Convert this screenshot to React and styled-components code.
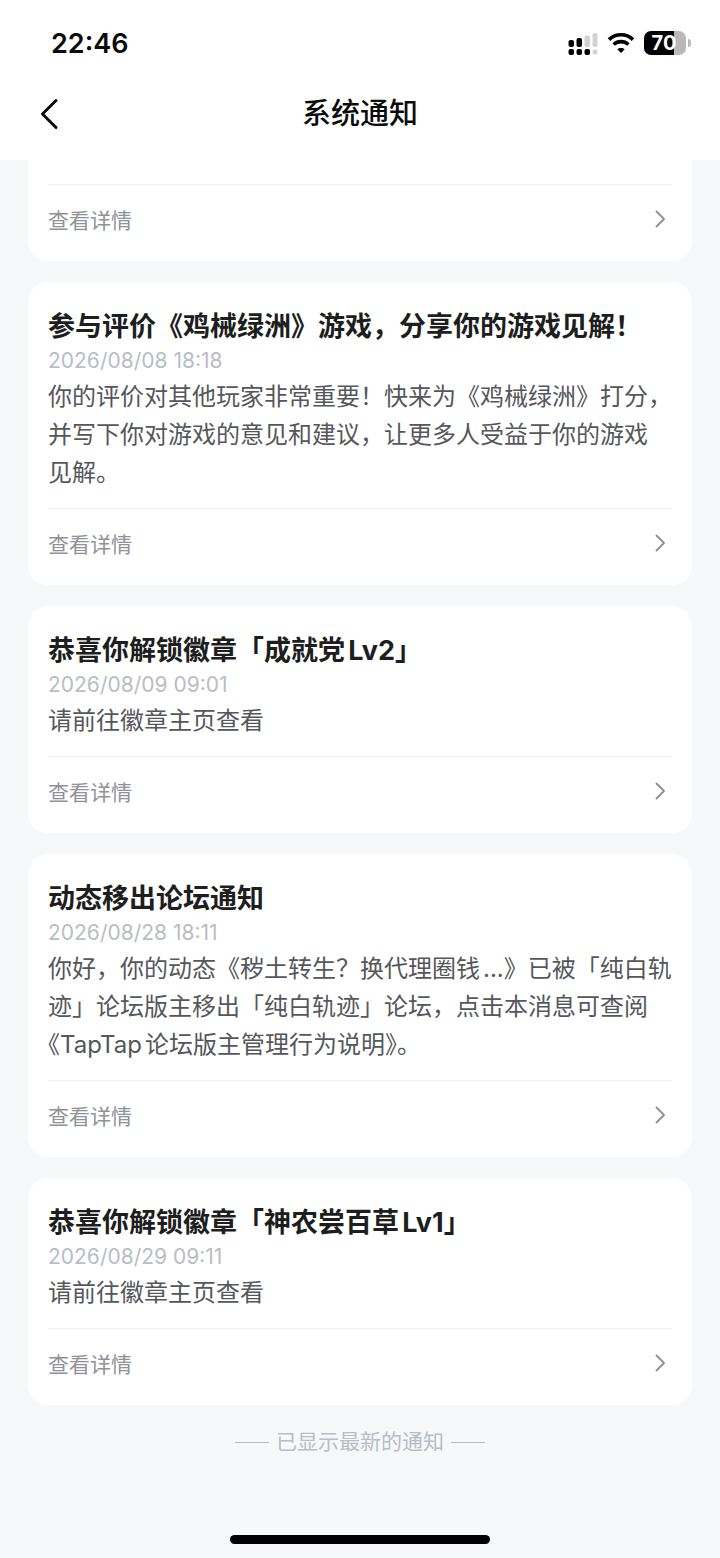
import styled, { createGlobalStyle } from 'styled-components'

const GlobalStyle = createGlobalStyle`
  * {
    box-sizing: border-box;
  }
  body {
    margin: 0;
    background: #f6f8fa;
    font-family: Inter, "Noto Sans CJK SC", sans-serif;
    text-autospace: normal;
    text-spacing-trim: trim-start;
    -webkit-font-smoothing: antialiased;
  }
  h1, h2, p {
    margin: 0;
  }
`;

const Page = styled.div`
  display: flex;
  flex-direction: column;
  min-height: 100vh;
`;

//--------- HEADER SECTION ---------
const Header = styled.header`
  background: #fff;
`;

const StatusBar = styled.div`
  display: flex;
  align-items: center;
  justify-content: space-between;
  height: 86px;
  padding: 0 29px 0 51px;
`;

const Clock = styled.time`
  font-size: 27px;
  font-weight: 600;
  color: #0b0b0c;
`;

const StatusIcons = styled.div`
  display: flex;
  align-items: center;
  gap: 9px;
`;

const Battery = styled.div`
  display: flex;
  align-items: center;
  gap: 2px;
`;

const BatteryBody = styled.div`
  display: grid;
  place-items: center;
  width: 42px;
  height: 24px;
  padding-right: 2px;
  border-radius: 7px;
  background: linear-gradient(to right, #000 72%, #b9b9b9 72%);
  font-size: 20px;
  line-height: 24px;
  font-weight: 700;
  color: #fff;
`;

const BatteryTip = styled.div`
  width: 3px;
  height: 8px;
  border-radius: 0 3px 3px 0;
  background: #b9b9b9;
`;

const NavBar = styled.nav`
  display: grid;
  grid-template-columns: 100px 1fr 100px;
  align-items: center;
  height: 74px;
  padding-bottom: 18px;
`;

const BackButton = styled.button`
  display: flex;
  align-items: center;
  padding: 0 0 0 39px;
  border: 0;
  background: none;
  color: #0b0b0c;
`;

const PageTitle = styled.h1`
  text-align: center;
  font-size: 29px;
  line-height: 40px;
  font-weight: 500;
  color: #0b0b0c;
`;

//--------- NOTICE LIST ---------
const NoticeList = styled.main`
  display: flex;
  flex-direction: column;
  gap: 21px;
  padding: 0 28px;
`;

const Card = styled.article`
  padding: ${({ $cut }) => ($cut ? '24px 20px 0' : '26px 20px 0')};
  border-radius: ${({ $cut }) => ($cut ? '0 0 20px 20px' : '20px')};
  background: #fff;
`;

const CardTitle = styled.h2`
  font-size: 27px;
  line-height: 38px;
  font-weight: 700;
  color: #1d1e20;
`;

const CardDate = styled.time`
  display: block;
  margin-bottom: 3px;
  font-size: 21px;
  line-height: 29px;
  color: #b9bdc4;
`;

const CardText = styled.p`
  margin-bottom: 16px;
  font-size: 24px;
  line-height: 38px;
  white-space: pre-line;
  color: #55575b;
`;

const DetailLink = styled.a`
  display: flex;
  align-items: center;
  justify-content: space-between;
  height: 77px;
  padding: 0 5px 8px 0;
  border-top: 1px solid #f0f1f3;
  font-size: 21px;
  color: #8f9399;
  text-decoration: none;
`;

//--------- BOTTOM ---------
const EndNote = styled.p`
  display: flex;
  align-items: center;
  justify-content: center;
  gap: 7px;
  padding-top: 21px;
  font-size: 21px;
  line-height: 32px;
  color: #b9bdc4;

  &::before,
  &::after {
    content: '';
    width: 34px;
    height: 1px;
    background: #b9bdc4;
  }
`;

const HomeIndicator = styled.div`
  width: 36%;
  height: 9px;
  margin: auto auto 14px;
  border-radius: 5px;
  background: #000;
`;

const notices = [
  {
    title: "参与评价《鸡械绿洲》游戏，分享你的游戏见解！",
    date: "2026/08/08 18:18",
    text: "你的评价对其他玩家非常重要！快来为《鸡械绿洲》打分，\n并写下你对游戏的意见和建议，让更多人受益于你的游戏\n见解。"
  },
  {
    title: "恭喜你解锁徽章「成就党Lv2」",
    date: "2026/08/09 09:01",
    text: "请前往徽章主页查看"
  },
  {
    title: "动态移出论坛通知",
    date: "2026/08/28 18:11",
    text: "你好，你的动态《秽土转生？换代理圈钱...》已被「纯白轨\n迹」论坛版主移出「纯白轨迹」论坛，点击本消息可查阅\n《TapTap论坛版主管理行为说明》。"
  },
  {
    title: "恭喜你解锁徽章「神农尝百草Lv1」",
    date: "2026/08/29 09:11",
    text: "请前往徽章主页查看"
  }
]

const SignalIcon = () => (
  <svg width="30" height="24" viewBox="0 0 30 24" aria-hidden="true">
    <g fill="#000">
      <rect x="0.5" y="9" width="5.5" height="7" rx="2" />
      <rect x="8.5" y="7" width="5.5" height="9" rx="2" />
      <rect x="0.5" y="18" width="5.5" height="6" rx="2" />
      <rect x="8.5" y="18" width="5.5" height="6" rx="2" />
      <rect x="16.5" y="18" width="5.5" height="6" rx="2" />
    </g>
    <g fill="#d3d3d3">
      <rect x="16.5" y="4.5" width="5.5" height="11.5" rx="2" />
      <rect x="24.5" y="2" width="5" height="14" rx="2" />
      <rect x="24.5" y="18.5" width="5" height="5" rx="2" />
    </g>
  </svg>
)

const WifiIcon = () => (
  <svg width="28" height="22" viewBox="0 0 28 22" fill="none" aria-hidden="true">
    <path d="M2 7.6C8.8 1.1 19.2 1.1 26 7.6" stroke="#000" strokeWidth="3.7" />
    <path d="M6.6 12.5C10.9 8.6 17.1 8.6 21.4 12.5" stroke="#000" strokeWidth="3.6" />
    <path d="M14 21L10.3 17.3C12.4 15.5 15.6 15.5 17.7 17.3Z" fill="#000" />
  </svg>
)

const BackIcon = () => (
  <svg width="20" height="32" viewBox="0 0 20 32" fill="none" aria-hidden="true">
    <path d="M17 2.5L3.5 16L17 29.5" stroke="currentColor" strokeWidth="3" strokeLinecap="round" strokeLinejoin="round" />
  </svg>
)

const MoreIcon = () => (
  <svg width="14" height="20" viewBox="0 0 14 20" fill="none" aria-hidden="true">
    <path d="M3.5 2.5L11 10L3.5 17.5" stroke="currentColor" strokeWidth="2" strokeLinecap="round" strokeLinejoin="round" />
  </svg>
)

const Detail = () => (
  <DetailLink href="#detail">
    查看详情
    <MoreIcon />
  </DetailLink>
)

const noticeCards = notices.map((notice) => (
  <Card key={notice.date}>
    <CardTitle>{notice.title}</CardTitle>
    <CardDate>{notice.date}</CardDate>
    <CardText>{notice.text}</CardText>
    <Detail />
  </Card>
));

export default function App() {
  return (
    <Page lang="zh-CN">
      <GlobalStyle />
      <Header>
        <StatusBar>
          <Clock>22:46</Clock>
          <StatusIcons>
            <SignalIcon />
            <WifiIcon />
            <Battery>
              <BatteryBody>70</BatteryBody>
              <BatteryTip />
            </Battery>
          </StatusIcons>
        </StatusBar>
        <NavBar>
          <BackButton type="button" aria-label="返回">
            <BackIcon />
          </BackButton>
          <PageTitle>系统通知</PageTitle>
        </NavBar>
      </Header>
      <NoticeList>
        <Card $cut>
          <Detail />
        </Card>
        {noticeCards}
      </NoticeList>
      <EndNote>已显示最新的通知</EndNote>
      <HomeIndicator />
    </Page>
  );
}
